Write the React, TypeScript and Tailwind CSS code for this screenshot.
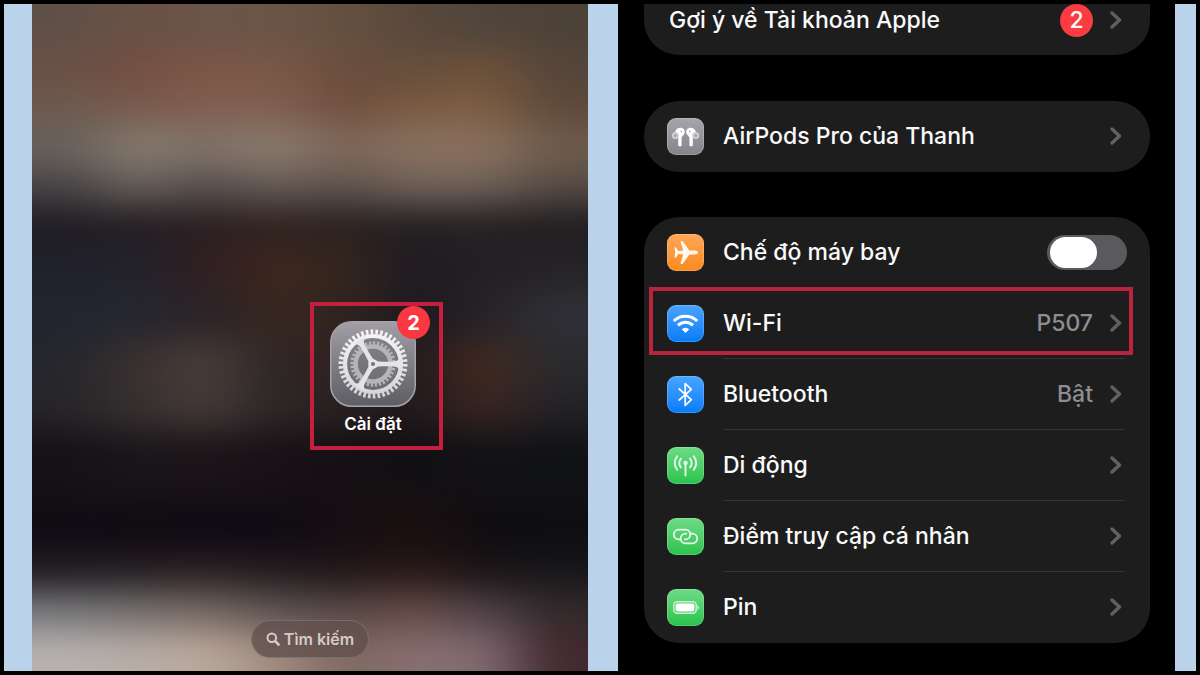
import React from 'react';

// Soft wallpaper: a coarse colour grid which gets blurred
const ROW_EDGES = [0, 46, 86, 121, 166, 202, 240, 286, 336, 386, 426, 496, 551, 588, 628, 667];

const WALLPAPER = [
  ['#5f5047', '#6a5146', '#6b5448', '#6a5547', '#64503f', '#58483c', '#51453b', '#4c4238'],
  ['#6a5046', '#754f42', '#7b5747', '#7b5847', '#6b4d3d', '#664d3c', '#6f5239', '#55453a'],
  ['#6d5a4f', '#785a4d', '#825f50', '#805f50', '#6f4f3f', '#7b5b42', '#7e5e43', '#5e4939'],
  ['#67605a', '#857a6f', '#7e7066', '#8a7a6e', '#7c6658', '#88705f', '#8a705e', '#6d5b4c'],
  ['#454245', '#655d56', '#544d4b', '#635953', '#5b504b', '#6f6159', '#6c5f57', '#544a44'],
  ['#201c22', '#221d23', '#2a1f22', '#30211f', '#2a211f', '#221f22', '#252022', '#201d20'],
  ['#20212b', '#23222b', '#311f21', '#3c271f', '#34251e', '#1f1b21', '#241f24', '#252327'],
  ['#22252f', '#25262f', '#2a2328', '#38271f', '#30241f', '#1d191f', '#262227', '#2f3036'],
  ['#25262c', '#39302f', '#4b3e39', '#2c2526', '#33221f', '#221a1c', '#43291f', '#292a2e'],
  ['#272528', '#363030', '#443937', '#2c2728', '#291f20', '#1e191c', '#3a2520', '#222126'],
  ['#151116', '#1a1519', '#1b1519', '#181217', '#150f13', '#110f12', '#121116', '#111216'],
  ['#0f0c13', '#110b12', '#100b13', '#100b13', '#150e12', '#1b0f10', '#0f0d10', '#0e0e13'],
  ['#232025', '#272226', '#2d2424', '#241d20', '#221819', '#2c1a19', '#1b1517', '#19171a'],
  ['#78787b', '#76716f', '#786a62', '#5e5554', '#594847', '#674d48', '#50434a', '#332a2b'],
  ['#b7b2b0', '#b8aca5', '#bba89b', '#a08c81', '#7e685f', '#896f70', '#806b72', '#41292f'],
];

function Wallpaper() {
  return (
    <svg
      className="absolute inset-0 w-full h-full"
      viewBox="0 0 560 667"
      preserveAspectRatio="none"
      aria-hidden="true"
    >
      <defs>
        <filter
          id="soften"
          filterUnits="userSpaceOnUse"
          x="-100"
          y="-100"
          width="760"
          height="867"
          colorInterpolationFilters="sRGB"
        >
          <feGaussianBlur stdDeviation="30 16" />
        </filter>
      </defs>
      <g filter="url(#soften)">
        {WALLPAPER.map((colors, r) => {
          const top = r === 0 ? -80 : ROW_EDGES[r];
          const bottom = r === WALLPAPER.length - 1 ? 747 : ROW_EDGES[r + 1];
          return colors.map((color, c) => {
            const left = c === 0 ? -90 : c * 70;
            const right = c === 7 ? 650 : c * 70 + 70;
            return (
              <rect
                key={`${r}-${c}`}
                x={left}
                y={top}
                width={right - left + 1}
                height={bottom - top + 1}
                fill={color}
              />
            );
          });
        })}
      </g>
    </svg>
  );
}

function GearIcon() {
  return (
    <svg viewBox="0 0 86 86" className="w-[86px] h-[86px]" aria-hidden="true">
      <defs>
        <linearGradient id="tile" x1="0" y1="0" x2="0" y2="1">
          <stop offset="0" stopColor="#a19fa5" />
          <stop offset="1" stopColor="#5f5d64" />
        </linearGradient>
        <linearGradient id="gear" gradientUnits="userSpaceOnUse" x1="0" y1="8" x2="0" y2="78">
          <stop offset="0" stopColor="#f6f6f7" />
          <stop offset="1" stopColor="#d3d3d6" />
        </linearGradient>
      </defs>
      <rect x="0.75" y="0.75" width="84.5" height="84.5" rx="21" fill="url(#tile)" stroke="#a5a3a9" strokeWidth="1.5" />
      <circle cx="43" cy="43" r="30" fill="#6f6d73" opacity="0.5" />
      <g fill="none" stroke="#b5b4b8">
        <circle cx="43" cy="43" r="17.5" strokeWidth="4.6" />
        <circle cx="43" cy="43" r="21" strokeWidth="3.4" pathLength="64" strokeDasharray="1.1 0.9" />
      </g>
      <g fill="none" stroke="url(#gear)">
        <circle cx="43" cy="43" r="28" strokeWidth="4.2" />
        <circle cx="43" cy="43" r="32" strokeWidth="5" pathLength="84" strokeDasharray="1.1 0.9" />
      </g>
      {[0, 120, 240].map((angle) => (
        <path
          key={angle}
          transform={`rotate(${angle} 43 43)`}
          d="M43 39.4 C48 41 58 40.800 64 40.500 C67 40.200 69 39 69.500 35.500 L71 43 L69.500 50.500 C69 47 67 45.800 64 45.500 C58 45.200 48 45 43 46.600 Z"
          fill="url(#gear)"
        />
      ))}
      <circle cx="43" cy="43" r="4.8" fill="#e6e6e8" />
      <circle cx="43" cy="43" r="2.1" fill="#77757b" />
    </svg>
  );
}

function AirPodsIcon() {
  return (
    <svg viewBox="0 0 37 37" className="w-[37px] h-[37px] shrink-0" aria-hidden="true">
      {[false, true].map((flip) => (
        <g key={String(flip)} transform={flip ? 'translate(37 0) scale(-1 1)' : undefined}>
          <path
            d="M8 14.500 C8.500 10.500 12.500 8.800 15.500 10.200 C18.300 11.600 18.300 14.800 16.500 17 L14.800 19 L10.500 19.500 Z"
            fill="#fff"
          />
          <rect x="11.200" y="16" width="3.400" height="12.200" rx="1" fill="#fff" />
          <circle cx="8.300" cy="17.500" r="3.500" fill="#d0cfd3" />
          <circle cx="8.300" cy="17.500" r="1.500" fill="#a5a4a9" />
          <circle cx="14.300" cy="13.500" r="0.800" fill="#98979c" />
        </g>
      ))}
    </svg>
  );
}

function AirplaneIcon() {
  return (
    <svg viewBox="0 0 37 37" className="w-[37px] h-[37px] shrink-0" aria-hidden="true">
      <path
        d="M31 18.500 C31 17.100 28.700 16.600 27 16.600 H22.300 L16.200 7.800 C15.900 7.300 15.500 7.100 15 7.100 H14.200 C13.700 7.100 13.500 7.500 13.600 7.900 L16.200 16.600 L11.300 16.900 L9.200 13.700 C9 13.400 8.800 13.200 8.400 13.200 H8 C7.700 13.200 7.500 13.500 7.500 13.800 L8.200 18.500 L7.500 23.200 C7.500 23.500 7.700 23.800 8 23.800 H8.400 C8.800 23.800 9 23.600 9.200 23.300 L11.300 20.100 L16.200 20.400 L13.600 29.100 C13.500 29.500 13.700 29.900 14.200 29.900 H15 C15.500 29.900 15.900 29.700 16.200 29.200 L22.300 20.400 H27 C28.700 20.400 31 19.900 31 18.500 Z"
        fill="#fff8f0"
      />
    </svg>
  );
}

function WifiIcon() {
  return (
    <svg
      viewBox="0 0 37 37"
      className="w-[37px] h-[37px] shrink-0"
      fill="none"
      stroke="#fff"
      strokeWidth="3"
      aria-hidden="true"
    >
      <path d="M6.800 16 A16.600 16.600 0 0 1 30.200 16" />
      <path d="M11 20.400 A10.600 10.600 0 0 1 26 20.400" />
      <path d="M14.800 24.200 A5.300 5.300 0 0 1 22.200 24.200 L18.500 28 Z" fill="#fff" stroke="none" />
    </svg>
  );
}

function BluetoothIcon() {
  return (
    <svg
      viewBox="0 0 37 37"
      className="w-[37px] h-[37px] shrink-0"
      fill="none"
      stroke="#fff"
      strokeWidth="1.700"
      strokeLinecap="round"
      strokeLinejoin="round"
      aria-hidden="true"
    >
      <path d="M12.200 13 L24.300 23.700 L18.200 29.500 V7.500 L24.300 13.300 L12.200 24" />
    </svg>
  );
}

function AntennaIcon() {
  return (
    <svg
      viewBox="0 0 37 37"
      className="w-[37px] h-[37px] shrink-0"
      fill="none"
      stroke="#e6f9eb"
      strokeWidth="1.900"
      strokeLinecap="round"
      aria-hidden="true"
    >
      <path d="M18.500 16.500 V28.500" />
      <circle cx="18.500" cy="16" r="2.200" fill="#e6f9eb" stroke="none" />
      <path d="M14 11.600 A6.500 6.500 0 0 0 14 20.400 M23 11.600 A6.500 6.500 0 0 1 23 20.400" />
      <path d="M10.300 9.200 A10.500 10.500 0 0 0 10.300 22.800 M26.700 9.200 A10.500 10.500 0 0 1 26.700 22.800" />
    </svg>
  );
}

function HotspotIcon() {
  return (
    <svg
      viewBox="0 0 37 37"
      className="w-[37px] h-[37px] shrink-0"
      fill="none"
      stroke="#e6f9eb"
      strokeWidth="1.800"
      strokeLinecap="round"
      aria-hidden="true"
    >
      <path d="M13 21.300 H11.600 A4.800 4.800 0 0 1 11.600 11.700 H18.500 A4.800 4.800 0 0 1 18.500 21.300 H17.800" />
      <path d="M24 15.700 H25.400 A4.800 4.800 0 0 1 25.400 25.300 H18.500 A4.800 4.800 0 0 1 18.500 15.700 H19.200" />
    </svg>
  );
}

function BatteryIcon() {
  return (
    <svg viewBox="0 0 37 37" className="w-[37px] h-[37px] shrink-0" aria-hidden="true">
      <rect x="6.800" y="12.800" width="22.400" height="11.400" rx="3.500" fill="none" stroke="#c8f3d2" strokeWidth="1.500" />
      <rect x="8.600" y="14.600" width="18.800" height="7.800" rx="2" fill="#fff" />
      <path d="M30.800 16.500 Q32.600 18.500 30.800 20.500 Z" fill="#c8f3d2" stroke="#c8f3d2" strokeWidth="0.600" />
    </svg>
  );
}

function Chevron() {
  return (
    <svg viewBox="0 0 12 18" className="w-3 h-[18px] shrink-0" aria-hidden="true">
      <path
        d="M2 2 L9.500 9 L2 16"
        fill="none"
        stroke="#606064"
        strokeWidth="3.400"
        strokeLinecap="round"
        strokeLinejoin="round"
      />
    </svg>
  );
}

interface RowProps {
  icon: React.ReactNode;
  tile: string;
  label: string;
  value?: string;
  divider?: boolean;
  highlighted?: boolean;
}

function IconTile({ tile, children }: { tile: string; children: React.ReactNode }) {
  return (
    <span
      className={`flex items-center justify-center shrink-0 w-[37px] h-[37px] rounded-[9px] border border-white/20 bg-linear-to-b bg-origin-border ${tile}`}
    >
      {children}
    </span>
  );
}

function SettingsRow({ icon, tile, label, value, divider, highlighted }: RowProps) {
  return (
    <li className="relative">
      <button type="button" className="flex items-center w-full h-[71px] pl-[23px] text-left">
        <IconTile tile={tile}>{icon}</IconTile>
        <span
          className={`flex items-center flex-1 h-full ml-[19px] mr-[25px] pr-[3px] border-b ${
            divider ? 'border-[#333335]' : 'border-transparent'
          }`}
        >
          <span className="flex-1">{label}</span>
          {value && <span className="mr-[17px] text-[#8d8d92]">{value}</span>}
          <Chevron />
        </span>
      </button>
      {highlighted && (
        <span className="absolute -top-px bottom-1 left-[5px] right-[17px] border-4 border-[#b8243f] pointer-events-none" />
      )}
    </li>
  );
}

const GRAY = 'from-[#a6a5aa] to-[#85848a]';
const ORANGE = 'from-[#ffa755] to-[#fb8a18]';
const BLUE = 'from-[#48a4ff] to-[#007cf8]';
const GREEN = 'from-[#6cdb85] to-[#27c34d]';

export default function App() {
  return (
    <div className="min-h-screen bg-black p-1 font-['Inter','Liberation_Sans',sans-serif]">
      <div className="grid grid-cols-[28px_556fr_30px_557fr_21px] min-h-[calc(100vh-8px)] bg-[#bad3eb]">
        <section className="relative col-start-2 flex flex-col overflow-hidden">
          <Wallpaper />
          <div className="relative grid grid-cols-2 pt-[298px]">
            <div className="col-start-2 w-[133px] h-[148px] pt-[15px] pl-4 border-4 border-[#c41f3d]">
              <button type="button" className="relative flex flex-col items-center w-[86px]">
                <GearIcon />
                <span className="mt-[7px] text-[17px] leading-5 font-semibold text-white whitespace-nowrap">
                  Cài đặt
                </span>
                <span className="absolute -top-[15px] -right-[14px] flex items-center justify-center w-[33px] h-[33px] rounded-full bg-[#fb3742] text-xl font-bold text-white">
                  2
                </span>
              </button>
            </div>
          </div>
          <button
            type="button"
            className="relative self-center flex items-center justify-center gap-1 w-[118px] h-[38px] mt-[170px] rounded-full border border-white/15 bg-[#62504c]/80 text-base font-semibold text-[#d5cbc8]"
          >
            <svg viewBox="0 0 14 14" className="w-[14px] h-[14px]" fill="none" stroke="currentColor" aria-hidden="true">
              <circle cx="5.800" cy="5.800" r="4.300" strokeWidth="2" />
              <path d="M9.200 9.200 L12.500 12.500" strokeWidth="2.600" strokeLinecap="round" />
            </svg>
            Tìm kiếm
          </button>
        </section>

        <section className="col-start-4 bg-black pl-[26px] pr-[25px] text-[23px] leading-8 font-medium text-[#fafafa]">
          <button
            type="button"
            className="flex items-center w-full h-[51px] pb-[19px] pl-[25px] pr-7 rounded-b-[35px] bg-[#1d1d1e] text-left"
          >
            <span className="flex-1">Gợi ý về Tài khoản Apple</span>
            <span className="flex items-center justify-center w-[33px] h-[33px] mr-[17px] rounded-full bg-[#fc3c40]">
              2
            </span>
            <Chevron />
          </button>

          <ul className="mt-[46px] rounded-[35px] bg-[#1d1d1e]">
            <SettingsRow icon={<AirPodsIcon />} tile={GRAY} label="AirPods Pro của Thanh" />
          </ul>

          <ul className="mt-[45px] rounded-[35px] bg-[#1d1d1e]">
            <li className="flex items-center h-[71px] pl-[23px]">
              <IconTile tile={ORANGE}>
                <AirplaneIcon />
              </IconTile>
              <span className="flex items-center flex-1 h-full ml-[19px] mr-[23px] border-b border-transparent">
                <label htmlFor="airplane" className="flex-1">
                  Chế độ máy bay
                </label>
                <input
                  type="checkbox"
                  id="airplane"
                  role="switch"
                  className="appearance-none flex items-center w-20 h-[35px] px-[3px] rounded-full bg-[#5a595e] before:block before:w-[47px] before:h-[31px] before:rounded-full before:bg-white"
                />
              </span>
            </li>
            <SettingsRow icon={<WifiIcon />} tile={BLUE} label="Wi-Fi" value="P507" divider highlighted />
            <SettingsRow icon={<BluetoothIcon />} tile={BLUE} label="Bluetooth" value="Bật" divider />
            <SettingsRow icon={<AntennaIcon />} tile={GREEN} label="Di động" divider />
            <SettingsRow icon={<HotspotIcon />} tile={GREEN} label="Điểm truy cập cá nhân" divider />
            <SettingsRow icon={<BatteryIcon />} tile={GREEN} label="Pin" />
          </ul>
        </section>
      </div>
    </div>
  );
}
